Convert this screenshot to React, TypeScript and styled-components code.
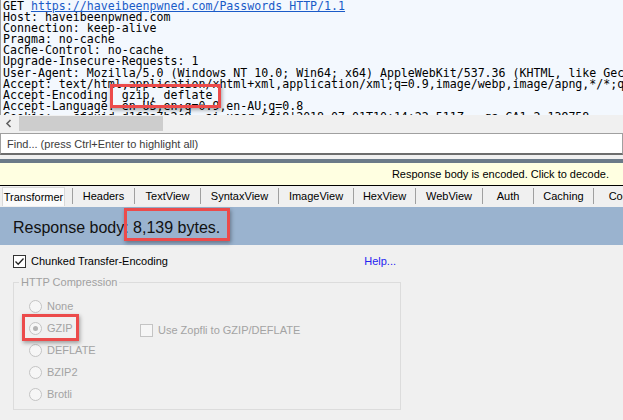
import styled, { createGlobalStyle } from "styled-components";

const GlobalStyle = createGlobalStyle`
  * {
    box-sizing: border-box;
  }
  body {
    margin: 0;
    background: #f0f0f0;
    overflow: hidden;
  }
`;

const Window = styled.div`
  width: 623px;
  height: 420px;
  display: flex;
  flex-direction: column;
  overflow: hidden;
  font-family: "Liberation Sans", Arial, sans-serif;
  font-size: 11px;
  color: #000;
`;

// request inspector (top half)
const RequestPane = styled.div`
  height: 115px;
  flex-shrink: 0;
  background: #f3f8fe;
  border-left: 1px solid #a0a0a0;
  padding: 1px 0 0 2px;
  overflow: hidden;
`;

const RawLines = styled.pre`
  margin: 0;
  font-family: "DejaVu Sans Mono", "Liberation Mono", monospace;
  font-size: 11.6px;
  line-height: 11.1px;
  white-space: pre;
  color: #000;
`;

const Url = styled.span`
  color: #1a5bc8;
  text-decoration: underline;
`;

// red annotation box drawn over whatever it wraps
const Callout = styled.span<{ $box: string }>`
  position: relative;
  &::after {
    content: "";
    position: absolute;
    inset: ${(p) => p.$box};
    border: 3px solid #ec4b4b;
    box-shadow: 1px 2px 4px rgba(0, 0, 0, 0.35);
    pointer-events: none;
  }
`;

const CalloutRow = styled(Callout)`
  display: inline-flex;
  align-items: center;
  gap: 5px;
`;

const HScroll = styled.div`
  height: 17px;
  flex-shrink: 0;
  display: flex;
  align-items: center;
  background: #f0f0f0;
`;

const ScrollArrow = styled.div`
  width: 17px;
  height: 17px;
  display: flex;
  align-items: center;
  justify-content: center;
`;

const ScrollThumb = styled.div`
  width: 144px;
  height: 15px;
  margin-left: 2px;
  background: #cdcdcd;
`;

const FindBox = styled.div`
  height: 22px;
  flex-shrink: 0;
  margin-top: 1px;
  background: #fff;
  border: 1px solid #a0a0a0;
  border-bottom: 2px solid #6d6d6d;
  padding-left: 6px;
  display: flex;
  align-items: center;
  color: #3c3c3c;
`;

const Splitter = styled.div`
  height: 4px;
  flex-shrink: 0;
  margin-top: 4px;
  background: #6b7a88;
`;

// response inspector (bottom half)
const Notice = styled.div`
  height: 23px;
  flex-shrink: 0;
  background: #ffffe1;
  border-bottom: 1px solid #000;
  display: flex;
  align-items: center;
  justify-content: flex-end;
  padding-right: 14px;
`;

const TabStrip = styled.div`
  height: 20px;
  flex-shrink: 0;
  display: flex;
  align-items: flex-end;
  background: #f0f0f0;
  white-space: nowrap;
`;

const Tab = styled.div<{ $w: number; $active?: boolean }>`
  width: ${(p) => p.$w}px;
  flex-shrink: 0;
  display: flex;
  align-items: center;
  justify-content: center;
  ${(p) =>
    p.$active
      ? `
    height: 19px;
    margin: 0 7px 0 2px;
    background: #fbfbfb;
    border: 1px solid #d9d9d9;
    border-bottom: none;
  `
      : `
    height: 16px;
    margin-bottom: 2px;
    border-left: 1px solid #a0a0a0;
  `}
`;

const SizeBanner = styled.div`
  height: 38px;
  flex-shrink: 0;
  margin-top: 1px;
  background: #9ab3cf;
  display: flex;
  align-items: center;
  padding: 3px 0 0 13px;
  font-size: 16px;
  color: #111;
`;

const Options = styled.div`
  padding-top: 9px;
  display: flex;
  flex-direction: column;
`;

const OptionRow = styled.div`
  width: 396px;
  height: 14px;
  padding-left: 13px;
  display: flex;
  align-items: center;
  gap: 5px;
`;

const HelpLink = styled.span`
  margin-left: auto;
  color: #2424f0;
`;

const Box = styled.span<{ $disabled?: boolean }>`
  width: 13px;
  height: 13px;
  flex-shrink: 0;
  display: inline-flex;
  align-items: center;
  justify-content: center;
  border: 1px solid ${(p) => (p.$disabled ? "#c4c4c4" : "#333")};
  background: ${(p) => (p.$disabled ? "#f6f6f6" : "#fff")};
`;

const GroupBox = styled.fieldset`
  margin: 8px 0 0 13px;
  width: 388px;
  height: 134px;
  padding: 0 5px 3px;
  border: 1px solid #dcdcdc;
`;

const GroupTitle = styled.legend`
  padding: 0 2px;
  line-height: 13px;
  color: #a0a0a0;
`;

const GroupBody = styled.div`
  display: flex;
  padding: 6px 0 0 10px;
`;

const RadioList = styled.div`
  width: 111px;
  display: flex;
  flex-direction: column;
`;

const RadioRow = styled.div`
  height: 22px;
  display: flex;
  align-items: center;
  gap: 5px;
`;

const Radio = styled.span<{ $checked?: boolean }>`
  width: 13px;
  height: 13px;
  flex-shrink: 0;
  border-radius: 50%;
  border: 1px solid #c4c4c4;
  background: #f6f6f6;
  display: inline-flex;
  align-items: center;
  justify-content: center;
  &::after {
    content: "";
    width: 5px;
    height: 5px;
    border-radius: 50%;
    background: ${(p) => (p.$checked ? "#b4b4b4" : "transparent")};
  }
`;

const Dim = styled.span`
  color: #a3a3a3;
`;

const ZopfliOption = styled.div`
  margin-top: 24px;
  height: 22px;
  display: flex;
  align-items: center;
  gap: 5px;
`;

const tabs = [
  { label: "Headers", w: 62 },
  { label: "TextView", w: 66 },
  { label: "SyntaxView", w: 78 },
  { label: "ImageView", w: 75 },
  { label: "HexView", w: 62 },
  { label: "WebView", w: 67 },
  { label: "Auth", w: 51 },
  { label: "Caching", w: 60 },
  { label: "Cookies", w: 70 },
];

const compression = ["None", "GZIP", "DEFLATE", "BZIP2", "Brotli"];

export default function App() {
  return (
    <Window>
      <GlobalStyle />
      <RequestPane>
        <RawLines>
          {"GET "}
          <Url>https://haveibeenpwned.com/Passwords HTTP/1.1</Url>
          {"\nHost: haveibeenpwned.com\n"}
          {"Connection: keep-alive\n"}
          {"Pragma: no-cache\n"}
          {"Cache-Control: no-cache\n"}
          {"Upgrade-Insecure-Requests: 1\n"}
          {"User-Agent: Mozilla/5.0 (Windows NT 10.0; Win64; x64) AppleWebKit/537.36 (KHTML, like Gecko) Chrome/67.0\n"}
          {"Accept: text/html,application/xhtml+xml,application/xml;q=0.9,image/webp,image/apng,*/*;q=0.8\n"}
          {"Accept-Encoding: "}
          <Callout $box="-4px -9px -6px -12px">gzip, deflate</Callout>
          {"\nAccept-Language: en-US,en;q=0.9,en-AU;q=0.8\n"}
          {"Cookie: __cfduid=d1f3a7b2c9; ai_user=Gfi8|2018-07-01T10:14:22.511Z; _ga=GA1.2.139758\n"}
        </RawLines>
      </RequestPane>
      <HScroll>
        <ScrollArrow>
          <svg width="8" height="9" viewBox="0 0 8 9">
            <path d="M5.5 1 L2 4.5 L5.5 8" fill="none" stroke="#606060" strokeWidth="1.6" />
          </svg>
        </ScrollArrow>
        <ScrollThumb />
      </HScroll>
      <FindBox>Find... (press Ctrl+Enter to highlight all)</FindBox>
      <Splitter />
      <Notice>Response body is encoded. Click to decode.</Notice>
      <TabStrip>
        <Tab $w={63} $active>
          Transformer
        </Tab>
        {tabs.map((t) => (
          <Tab key={t.label} $w={t.w}>
            {t.label}
          </Tab>
        ))}
      </TabStrip>
      <SizeBanner>
        <span>
          {"Response body: "}
          <Callout $box="-11px -10px -5px -9px">8,139 bytes.</Callout>
        </span>
      </SizeBanner>
      <Options>
        <OptionRow>
          <Box>
            <svg width="11" height="11" viewBox="0 0 11 11">
              <path d="M1.5 5.5 L4.2 8.3 L9.5 2.5" fill="none" stroke="#222" strokeWidth="1.3" />
            </svg>
          </Box>
          <span>Chunked Transfer-Encoding</span>
          <HelpLink>Help...</HelpLink>
        </OptionRow>
        <GroupBox>
          <GroupTitle>HTTP Compression</GroupTitle>
          <GroupBody>
            <RadioList>
              {compression.map((c) => (
                <RadioRow key={c}>
                  {c === "GZIP" ? (
                    <CalloutRow $box="-8px -6px -6px -7px">
                      <Radio $checked />
                      <Dim>{c}</Dim>
                    </CalloutRow>
                  ) : (
                    <>
                      <Radio />
                      <Dim>{c}</Dim>
                    </>
                  )}
                </RadioRow>
              ))}
            </RadioList>
            <ZopfliOption>
              <Box $disabled />
              <Dim>Use Zopfli to GZIP/DEFLATE</Dim>
            </ZopfliOption>
          </GroupBody>
        </GroupBox>
      </Options>
    </Window>
  );
}
